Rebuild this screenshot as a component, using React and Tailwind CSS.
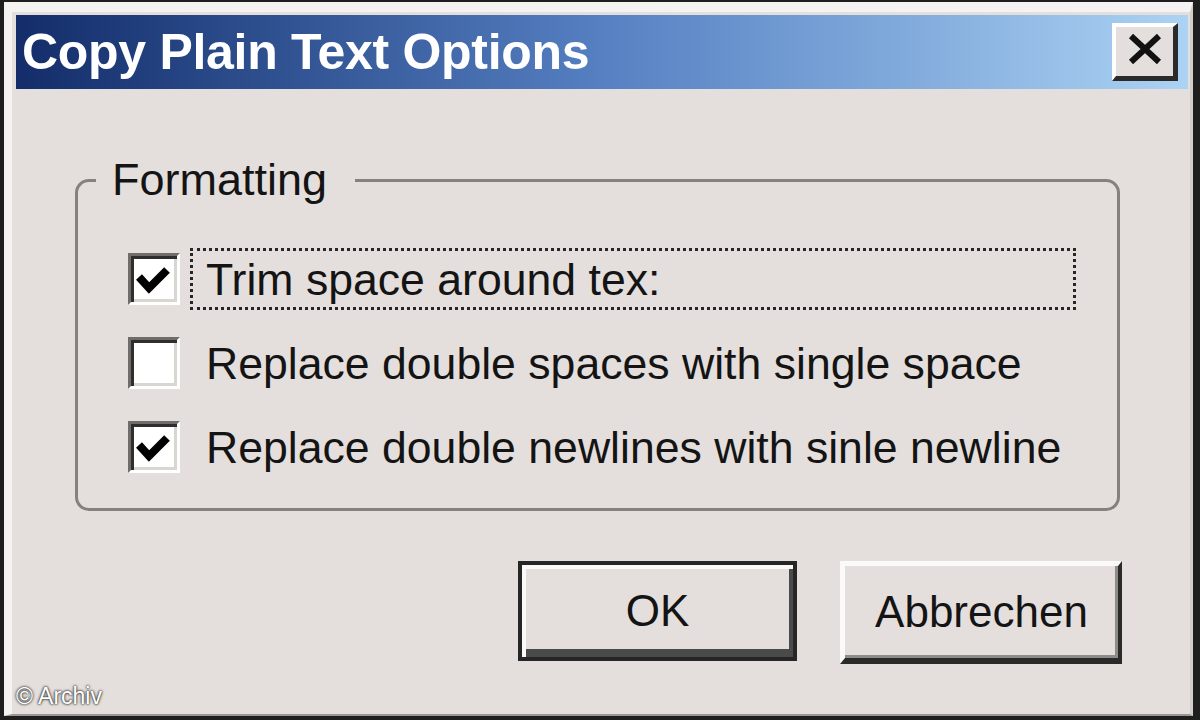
import React, { useState } from 'react';

const options = [
  { id: 'trim', label: 'Trim space around tex:', checked: true, focused: true },
  { id: 'spaces', label: 'Replace double spaces with single space', checked: false },
  { id: 'newlines', label: 'Replace double newlines with sinle newline', checked: true },
];

function CheckBox({ checked, onToggle }) {
  return (
    <button
      type="button"
      onClick={onToggle}
      className="w-[52px] h-[52px] shrink-0 bg-white border-[3px] border-t-[#6f6c69] border-l-[#6f6c69] border-r-white border-b-white shadow-[inset_3px_3px_0_#2e2e2e,inset_-3px_-3px_0_#d9d5d1]"
    >
      {checked && (
        <svg viewBox="0 0 46 46" className="w-full h-full">
          <path d="M8 21 L18 32 L36 14" fill="none" stroke="#000" strokeWidth="8" strokeLinejoin="miter" />
        </svg>
      )}
    </button>
  );
}

export default function App() {
  const [values, setValues] = useState(
    Object.fromEntries(options.map(o => [o.id, o.checked]))
  );

  return (
    <div className="relative w-[1200px] h-[720px] border-t-2 border-l-4 border-r-[7px] border-b-[4px] border-[#1e1e1e] font-['Liberation_Sans',Arial,sans-serif]">
      <div className="h-full flex flex-col bg-[#e4dfdc] border-t-[10px] border-l-[8px] border-r-[3px] border-b-[2px] border-t-[#f5f3f1] border-l-[#f5f3f1] border-r-[#d2cdc9] border-b-[#9a9692]">
        {/* Title bar */}
        <div className="mt-[3px] ml-[4px] mr-[2px] h-[74px] flex items-center justify-between pl-[6px] pr-[10px] bg-linear-to-r from-[#142d6a] via-[#5680c2] to-[#acd3f3]">
          <span className="text-white font-bold text-[50px] leading-none tracking-[-0.3px]">Copy Plain Text Options</span>
          <button
            type="button"
            className="w-[66px] h-[58px] flex items-center justify-center pb-[6px] bg-[#e4dfdc] border-t-[4px] border-l-[4px] border-r-[5px] border-b-[5px] border-t-white border-l-white border-r-[#2a2a2a] border-b-[#2a2a2a]"
          >
            <svg viewBox="0 0 36 32" className="w-[36px] h-[32px]">
              <path d="M4 3 L32 29 M32 3 L4 29" stroke="#111" strokeWidth="6" />
            </svg>
          </button>
        </div>

        {/* Formatting group */}
        <fieldset className="mt-[69px] ml-[63px] mr-[70px] border-[3px] border-[#85817d] rounded-[14px] pt-[46px] pb-[30px]">
          <legend className="ml-[18px] pl-[16px] pr-[28px] text-[45px] leading-[44px] text-[#141414]">Formatting</legend>
          <div className="flex flex-col gap-[22px] pl-[50px]">
            {options.map(o => (
              <div key={o.id} className="flex items-center h-[62px]">
                <CheckBox
                  checked={values[o.id]}
                  onToggle={() => setValues({ ...values, [o.id]: !values[o.id] })}
                />
                <label
                  className={`ml-[10px] h-[62px] flex items-center pl-[13px] pr-[14px] pt-[3px] text-[44.6px] text-[#141414] whitespace-nowrap ${o.focused ? 'w-[886px] border-[3px] border-dotted border-[#262626]' : 'border-[3px] border-transparent'}`}
                >
                  {o.label}
                </label>
              </div>
            ))}
          </div>
        </fieldset>

        {/* Buttons */}
        <div className="mt-[50px] flex justify-end gap-[43px] pr-[68px]">
          <button
            type="button"
            className="w-[279px] h-[100px] text-[44px] text-[#141414] bg-[#e4dfdc] border-[4px] border-[#262626] shadow-[inset_4px_4px_0_#fbfaf9,inset_-4px_-8px_0_#4a4a4a]"
          >
            OK
          </button>
          <button
            type="button"
            className="w-[282px] h-[103px] text-[44px] text-[#141414] bg-[#e4dfdc] border-t-[5px] border-l-[5px] border-r-[4px] border-b-[6px] border-t-[#fbfaf9] border-l-[#fbfaf9] border-r-[#2a2a2a] border-b-[#2a2a2a] shadow-[inset_-3px_-3px_0_#8f8b87]"
          >
            Abbrechen
          </button>
        </div>
      </div>

      <span className="absolute left-[12px] bottom-[8px] text-[23px] leading-none text-white [text-shadow:0_0_3px_#222,0_0_2px_#222]">© Archiv</span>
    </div>
  );
}
